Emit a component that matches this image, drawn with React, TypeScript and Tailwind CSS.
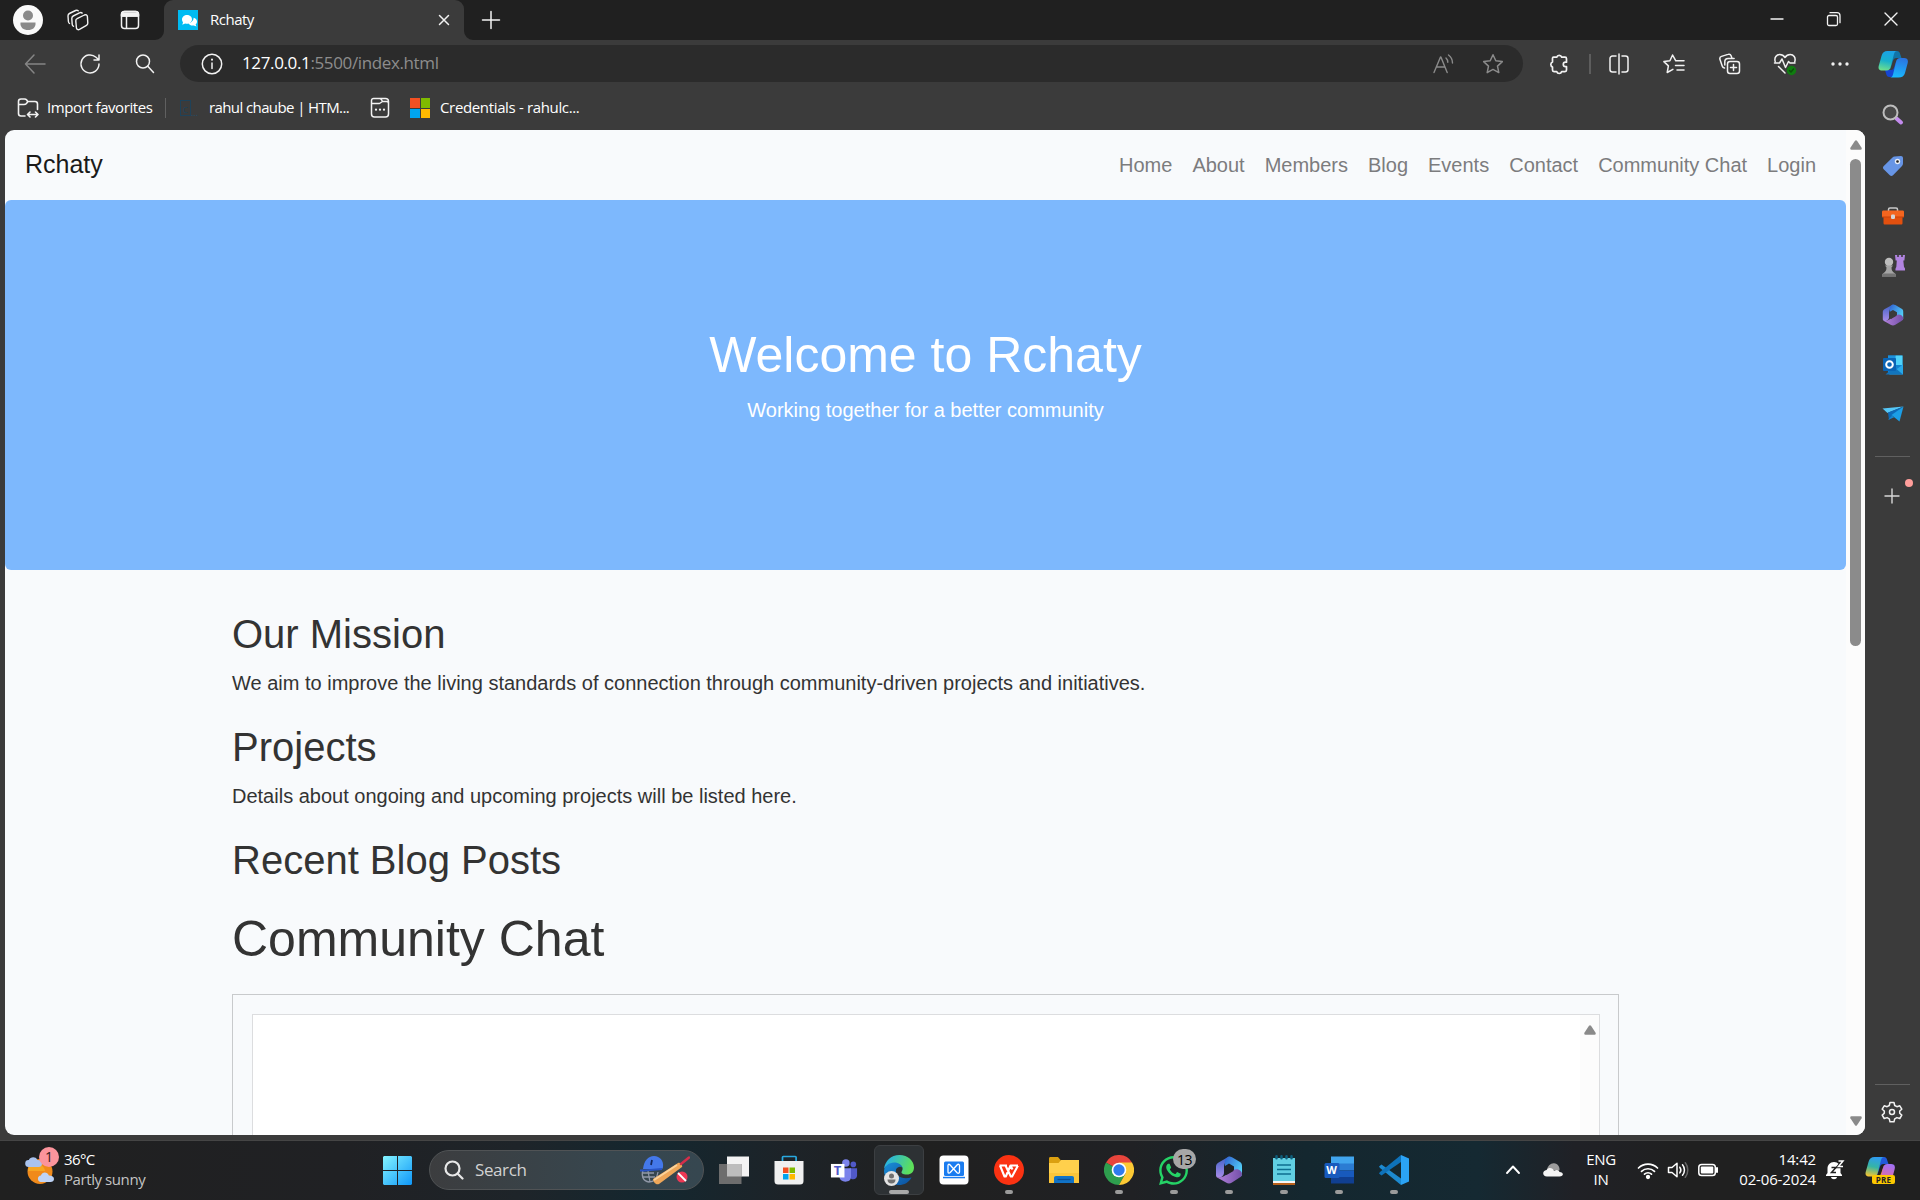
import React from "react";
import { FaWhatsapp } from "react-icons/fa";

type IconProps = { children: React.ReactNode; w?: number; h?: number; box?: string; stroke?: string; sw?: number };

/** Outline icon on a free view box. */
function Line({ children, w = 22, h = 22, box = "0 0 22 22", stroke = "#f2f2f2", sw = 1.5 }: IconProps) {
  return (
    <svg width={w} height={h} viewBox={box} fill="none" stroke={stroke} strokeWidth={sw} strokeLinecap="round" strokeLinejoin="round" className="shrink-0">
      {children}
    </svg>
  );
}

/** Filled, multi-colour artwork. */
function Art({ children, w = 30, h = 30, box = "0 0 30 30" }: IconProps) {
  return (
    <svg width={w} height={h} viewBox={box} className="shrink-0">
      {children}
    </svg>
  );
}

function Center({ children, className = "" }: { children: React.ReactNode; className?: string }) {
  return <div className={"flex shrink-0 items-center justify-center " + className}>{children}</div>;
}

function TitleBar() {
  return (
    <div className="flex h-10 bg-[#202020]">
      <div className="flex w-[164px] shrink-0 items-center pl-[13px]">
        <Art w={30} h={30}>
          <circle cx="15" cy="15" r="15" fill="#fafafa" />
          <circle cx="15" cy="10.5" r="5" fill="#8a8a8a" />
          <path d="M7.5 17.5h15c.6 5-3 7.500-7.500 7.500s-8.100-2.500-7.500-7.500z" fill="#8a8a8a" />
        </Art>
        <Center className="ml-[24px] w-[22px]">
          <Line sw={1.4}>
            <path d="M2.500 14.500C1.700 14 1.500 13.300 1.400 12.500L1 7c0-1.200.4-2 1.400-2.500l6.200-3c1-.5 2-.3 2.600.2" />
            <path d="M6.500 17.300c-.9-.4-1.300-1.100-1.300-2L4.800 9.500c0-1.200.4-2 1.400-2.500l6.300-3.200c1-.5 2-.3 2.700.3" />
            <path d="M8.800 12c-.1-1 .4-1.900 1.300-2.300l7.300-3.700c1.500-.7 2.900 0 3 1.600l.4 6.500c0 1-.4 1.800-1.300 2.300l-7 4c-1.500.8-3 0-3.100-1.700z" />
          </Line>
        </Center>
        <Center className="ml-[30px] w-[22px]">
          <Line sw={1.5}>
            <rect x="2.500" y="2.500" width="17" height="17" rx="3" />
            <path d="M2.500 7V5.500a3 3 0 0 1 3-3h11a3 3 0 0 1 3 3V7zM7.500 7v12" />
            <path d="M3 4h16v3H3z" fill="#f2f2f2" />
          </Line>
        </Center>
      </div>
      <div className="relative flex w-[300px] items-center rounded-t-[9px] bg-[#3b3b3b] pl-3.5">
        <svg className="absolute -left-[9px] bottom-0" width="9" height="9"><path d="M9 0v9H0a9 9 0 0 0 9-9z" fill="#3b3b3b" /></svg>
        <svg className="absolute -right-[9px] bottom-0" width="9" height="9"><path d="M0 0v9h9a9 9 0 0 1-9-9z" fill="#3b3b3b" /></svg>
        <Art w={20} h={20} box="0 0 20 20">
          <path d="M0 0h20v20H0z" fill="#00bbf2" />
          <path d="M19 11.500c0 1.300-.7 2.300-1.400 3l.9 1.900-2.700-.9c-2.600.5-5-.8-5.300-2.500 3.300-.4 5.400-3 5-5.300 2 .3 3.500 2 3.500 3.800z" fill="#fff" />
          <path d="M4 9.500c0-2.700 2.300-4.500 5-4.500s5 1.800 5 4.300-2.300 4.500-5 4.500c-.7 0-1.300-.1-1.900-.3L4.300 14.800l.7-2.500A4 4 0 0 1 4 9.500z" fill="#fff" />
        </Art>
        <span className="ml-3 flex-1 pb-0.5 text-[15px] tracking-[-0.5px] text-white">Rchaty</span>
        <Center className="mr-[9px] w-[22px]"><Line w={22}><path d="M6.500 6.500l9 9m0-9l-9 9" /></Line></Center>
      </div>
      <Center className="ml-[16px] w-[22px]"><Line><path d="M11 2.500v17M2.500 11h17" /></Line></Center>
      <div className="flex-1" />
      <Center className="h-[38px] w-[57px]"><Line sw={1.4}><path d="M5 11h12" /></Line></Center>
      <Center className="h-[38px] w-[57px]">
        <Line sw={1.3}><rect x="4.500" y="7.500" width="10" height="10" rx="1.500" /><path d="M7 4.700h7c2 0 3 1.200 3 3v7" /></Line>
      </Center>
      <Center className="h-[38px] w-[58px]"><Line sw={1.4}><path d="M5 5l12 12m0-12l-12 12" /></Line></Center>
    </div>
  );
}

function CopilotIcon({ pre = false }: { pre?: boolean }) {
  const id = pre ? "cp2" : "cp1";
  return (
    <Art w={30} h={28} box="0 0 30 28">
      <defs>
        <linearGradient id={id + "a"} x1="0.5" y1="0" x2="0.3" y2="1">
          <stop offset="0" stopColor={pre ? "#2f9bf0" : "#1ba1e6"} />
          <stop offset="0.5" stopColor={pre ? "#35b5a5" : "#18b0cc"} />
          <stop offset="1" stopColor={pre ? "#f5c430" : "#6fe08c"} />
        </linearGradient>
        <linearGradient id={id + "b"} x1="0.6" y1="0" x2="0.4" y2="1">
          <stop offset="0" stopColor={pre ? "#a070f5" : "#2b74e0"} />
          <stop offset="1" stopColor={pre ? "#f56a8a" : "#19b9ff"} />
        </linearGradient>
      </defs>
      <path d="M14 1h5c2 0 2.800 1.400 3.300 3.500L23.500 8h-5c-2 0-3 1-3.600 3L12 20z" fill={pre ? "#2259d8" : "#1174a8"} />
      <path d="M16 27h-4.500c-2 0-2.800-1-3.300-3L7 20h6c2 0 2.600-1 3.200-3L19 9z" fill={pre ? "#f78a3c" : "#1546d2"} />
      <path d="M9.500 1H19c-1.500 0-2.500 1.300-3 3l-3.300 13c-.6 2.200-1.600 3.500-4 3.500H4c-2.500 0-4-1.500-3.300-4.500L3.500 6c.9-3.300 2.800-5 6-5z" fill={"url(#" + id + "a)"} />
      <path d="M20.500 27.500H12c1.500 0 2.500-1.300 3-3L18 12c.6-2.500 1.900-4 4.500-4H26c2.900 0 4.500 1.500 3.700 5L27 23c-.9 3-3 4.500-6.500 4.500z" fill={"url(#" + id + "b)"} />
    </Art>
  );
}

function Toolbar() {
  return (
    <div className="flex h-12 items-center bg-[#3b3b3b] pb-px">
      <Center className="ml-[7px] w-[55px]"><Line stroke="#858585"><path d="M10 2L1.500 11l8.500 9M1.500 11H21" /></Line></Center>
      <Center className="w-[55px]"><Line><path d="M20 11a9 9 0 1 1-3-6.800l2.500 2.300M20 2v5h-5" /></Line></Center>
      <Center className="w-[55px]"><Line><circle cx="9" cy="8.500" r="6.500" /><path d="M13.800 13.300L19.500 19.500" /></Line></Center>
      <div className="ml-[8px] flex h-[37px] w-[1343px] items-center rounded-full bg-[#2b2b2b] pl-[21px]">
        <Line><circle cx="11" cy="11" r="9.700" /><path d="M11 10v5.500" /><path d="M11 6.600v.1" strokeWidth="2" /></Line>
        <span className="ml-[19px] flex-1 pb-px text-[17px] tracking-[-0.37px] text-[#8d8d8d]"><span className="text-white">127.0.0.1</span>:5500/index.html</span>
        <Center className="w-[50px]">
          <Line stroke="#8b8b8b" sw={1.400}><path d="M2 19.500L8.500 4h.4l6.300 15.500M4.500 14h8.500M14 5c1.300 1.200 1.800 2.500 1.800 4.300M16.500 2c2.600 1.900 4 4.500 4 8" /></Line>
        </Center>
        <Center className="mr-[5px] w-[50px]">
          <Line stroke="#8b8b8b" sw={1.500}><path d="M11 1.800l2.800 6 6.500.8-4.800 4.500 1.300 6.500L11 16.400l-5.800 3.200 1.300-6.500L1.700 8.600l6.500-.8z" /></Line>
        </Center>
      </div>
      <Center className="ml-[8px] w-[56px]">
        <Line sw={1.700}><path d="M5.500 4.200h3.200a2.600 2.600 0 0 1 5 0h3.300c1 0 1.500.5 1.500 1.500v3.500h-1a2.200 2.200 0 0 0 0 4.400h1v3.500c0 1-.5 1.500-1.500 1.500h-3.300a2.600 2.600 0 0 1-5 0H6c-1 0-1.500-.5-1.500-1.500V14a2.700 2.700 0 0 1 0-5V5.200c0-.6.300-1 1-1z" /></Line>
      </Center>
      <div className="ml-[2px] h-5 w-[2px] bg-[#5d5d5d]" />
      <Center className="w-[55px]">
        <Line><path d="M8 3H4.500A2.500 2.500 0 0 0 2 5.500v11A2.500 2.500 0 0 0 4.500 19H8M14 3h3.500A2.500 2.500 0 0 1 20 5.500v11a2.500 2.500 0 0 1-2.500 2.500H14M11 1v20" /></Line>
      </Center>
      <Center className="w-[56px]">
        <Line><path d="M14 7.800h-1.200L9.600 2 6.900 7.700.9 8.600l4.500 4.300-1.200 6.600 5.700-3.200M14 7.800h7M12.500 12.500H21M14 17h7" /></Line>
      </Center>
      <Center className="w-[55px]">
        <Line><rect x="8.500" y="8.500" width="12" height="12" rx="2.500" /><path d="M14.500 11.500v6M11.500 14.500h6M5.500 15c-1.400-.3-2-1-2.300-2L1 6.500c-.5-1.500.2-2.600 1.500-3.100L9 1.400c1.500-.5 2.600 0 3.100 1.300l.8 2.300M5.800 12V8.800a3.300 3.300 0 0 1 3.300-3.300h6" /></Line>
      </Center>
      <Center className="w-[55px]">
        <Line w={24} h={24} box="0 0 24 24">
          <path d="M2.200 9.500C1 5.500 3.500 2.500 6.800 2.500c2.300 0 4 1.200 5.200 3 1.200-1.800 2.900-3 5.200-3 3.300 0 5.800 3 4.600 7M1.500 11h5l2.500-4 3.500 8.500 3-6 1.500 1.500h5M5.500 14.500L12 21" />
          <circle cx="18.500" cy="18.500" r="4.700" fill="#107c10" stroke="none" /><path d="M16.500 18.500l1.500 1.500 2.500-3" stroke="#0a500a" />
        </Line>
      </Center>
      <Center className="w-[55px]"><Art w={18} h={4} box="0 0 18 4"><g fill="#f2f2f2"><circle cx="2" cy="2" r="1.700" /><circle cx="9" cy="2" r="1.700" /><circle cx="16" cy="2" r="1.700" /></g></Art></Center>
      <Center className="w-[51px]"><CopilotIcon /></Center>
    </div>
  );
}

function FavoritesBar() {
  return (
    <div className="flex h-10 items-center bg-[#3b3b3b] pl-[17px] text-[15px] text-white">
      <Line sw={1.600}><path d="M8 19H4a2.500 2.500 0 0 1-2.500-2.500v-12A2.500 2.500 0 0 1 4 2h3.500c1 0 1.700.4 2.200 1l1 1.500H18A2.500 2.500 0 0 1 20.500 7v5.500M1.500 7.500H7c1 0 1.800-.3 2.400-1l1.600-2M11 17.500h9.500M13 15l-2.500 2.500L13 20M18.500 15l2.500 2.500-2.500 2.500" /></Line>
      <span className="ml-[8px] w-[118px] pb-0.5 tracking-[-0.44px]">Import favorites</span>
      <div className="h-5 w-px bg-[#606060]" />
      <div className="ml-[14px] flex h-[17px] w-[29px] items-center">
        <div className="flex h-[16px] w-[11px] items-center justify-center border border-[#1f4259] text-[11px] leading-none text-[#1f4259]">c</div>
        <span className="mt-2 text-[9px] leading-none text-[#24506c]">...</span>
      </div>
      <span className="w-[161px] pb-0.5 tracking-[-0.6px]">rahul chaube | HTM...</span>
      <Line w={20} h={22} box="0 0 20 22" sw={1.500}>
        <path d="M3.500 1.500h6c1 0 1.600.4 2 1.200l1 1.800h4a2 2 0 0 1 2 2V17a3 3 0 0 1-3 3h-11a3 3 0 0 1-3-3V3.500a2 2 0 0 1 2-2zM1.500 6.500h8l3-2M8 1.500h7.500a3 3 0 0 1 3 3v2" />
        <path d="M6 12.500v.2M10 12.500v.2M14 12.500v.2" strokeWidth="2.200" />
      </Line>
      <div className="ml-5 grid grid-cols-2 gap-px">
        <div className="h-[9.5px] w-[9.5px] bg-[#f25022]" />
        <div className="h-[9.5px] w-[9.5px] bg-[#7fba00]" />
        <div className="h-[9.5px] w-[9.5px] bg-[#00a4ef]" />
        <div className="h-[9.5px] w-[9.5px] bg-[#ffb900]" />
      </div>
      <span className="ml-[10px] pb-0.5 tracking-[-0.35px]">Credentials - rahulc...</span>
    </div>
  );
}

function ArrowUp() {
  return <svg width="12" height="10" viewBox="0 0 12 10" className="shrink-0"><path d="M5 .8q1-1 2 0l4.600 7q.6 1.900-1.100 2h-9Q-.2 9.700.4 7.800z" fill="#8a8a8a" /></svg>;
}

const NAV = ["Home", "About", "Members", "Blog", "Events", "Contact", "Community Chat", "Login"];

function WebPage() {
  return (
    <div className="flex h-[1005px] w-[1860px] overflow-hidden rounded-[9px] bg-[#f8fafc] font-['Liberation_Sans',Arial,sans-serif] text-xl leading-[30px] text-[#333]">
      <div className="flex w-[1841px] flex-col overflow-hidden">
        <div className="flex h-[70px] shrink-0 items-center justify-between pr-5 pl-5">
          <div className="pb-0.5 text-[25px] text-[#1a1a1a]">Rchaty</div>
          <div className="flex text-[#7c7c7e]">
            {NAV.map((n) => <div key={n} className="px-2.5">{n}</div>)}
          </div>
        </div>
        <div className="flex h-[370px] shrink-0 flex-col items-center rounded-md bg-[#7db8fd] pt-[125px] text-white">
          <div className="mb-2.5 text-[50px] leading-[60px]">Welcome to Rchaty</div>
          <div>Working together for a better community</div>
        </div>
        <div className="mx-auto flex w-[1387px] flex-col gap-[25px] pt-10">
          <div><div className="mb-2.5 text-[40px] leading-[48px]">Our Mission</div><div>We aim to improve the living standards of connection through community-driven projects and initiatives.</div></div>
          <div><div className="mb-2.5 text-[40px] leading-[48px]">Projects</div><div>Details about ongoing and upcoming projects will be listed here.</div></div>
          <div className="text-[40px] leading-[48px]">Recent Blog Posts</div>
          <div className="text-[50px] leading-[60px]">Community Chat</div>
          <div className="h-[400px] border border-[#c8cacc] p-[19px] pr-[18px]">
            <div className="flex h-[360px] justify-end border border-[#dcdddf] bg-white">
              <div className="flex w-[19px] justify-center bg-[#fcfcfc] pt-[10px]"><ArrowUp /></div>
            </div>
          </div>
        </div>
      </div>
      <div className="flex w-[19px] flex-col items-center bg-[#fcfcfc] pt-[10px]">
        <ArrowUp />
        <div className="mt-[9px] h-[487px] w-[11px] rounded-full bg-[#8b8b8b]" />
        <div className="flex-1" />
        <div className="mb-[9px] rotate-180"><ArrowUp /></div>
      </div>
    </div>
  );
}

function M365({ size, id, hole }: { size: number; id: string; hole: string }) {
  return (
    <Art w={size} h={size} box="0 0 28 28">
      <defs>
        <linearGradient id={id + "x"} x1="0.3" y1="0" x2="0.3" y2="1"><stop offset="0" stopColor="#3f62c8" /><stop offset="1" stopColor="#a88ce8" /></linearGradient>
        <linearGradient id={id + "y"} x1="0" y1="0" x2="1" y2="0.7"><stop offset="0" stopColor="#2f5fd0" /><stop offset="1" stopColor="#55d5fa" /></linearGradient>
        <linearGradient id={id + "z"} x1="0" y1="0.5" x2="1" y2="0.5"><stop offset="0" stopColor="#b582dc" /><stop offset="1" stopColor="#7350a8" /></linearGradient>
      </defs>
      <path d="M14 .5L3.600 6.500C2.200 7.400 1 8.500 1 10.500v9c0 2 3 3 5 1.700 2-1.200 3-2.200 3-4.700v-6c0-2.500 1-4 2.500-5L16 2.500z" fill={"url(#" + id + "x)"} />
      <path d="M14 .5c1-.1 2 .2 3 .8L25 6c1.500 1 2 2 2 4v8c0 1-.5 2-1.500 2.500L19 14V10.500L14 7.500 10 10C9 5 10 2 14 .5z" fill={"url(#" + id + "y)"} />
      <path d="M1.500 21c3 1 6.500 0 8.500-1.500l8.500-5.500c3-1.800 8.500 0 8.500 4 0 2-1 2.800-2.300 3.600L17 26.500c-2 1.200-4 1.200-6 0L3 22z" fill={"url(#" + id + "z)"} />
      <path d="M14 8.500l4.500 2.600v4L11.500 19l-2.300-2v-5.700z" fill={hole} />
    </Art>
  );
}

function SideBar() {
  return (
    <div className="flex h-[1005px] flex-1 flex-col items-center">
      <div className="-mt-[41px] flex flex-col">
        <Center className="h-[51px]">
          <Art w={22} h={22} box="0 0 22 22"><path d="M14.500 14.500l4.500 4" stroke="#c38bee" strokeWidth="4" strokeLinecap="round" /><circle cx="8.500" cy="8.500" r="7" fill="#484848" stroke="#bdbdbd" strokeWidth="2" /></Art>
        </Center>
        <Center className="h-[51px]">
          <Art w={22} h={22} box="0 0 22 22"><path d="M12.500 1.500L19 1c1 0 2 .8 2 2v5.500c0 1-.3 1.700-1 2.400L11 20.200c-1 1-2.200 1-3.200 0L1.700 14.200c-1-1-.9-2.200.1-3.200L10.500 2.400c.6-.6 1.200-.8 2-.9z" fill="#6795e6" /><circle cx="15.500" cy="6.500" r="2.700" fill="#e6ecf7" /><circle cx="15.500" cy="6.500" r="1.300" fill="#222" /></Art>
        </Center>
        <Center className="h-[50px]">
          <Art w={22} h={22} box="0 0 22 22"><path d="M6.500 6V4.500c0-1 .6-1.500 1.500-1.500h6c.9 0 1.500.5 1.500 1.500V6" fill="none" stroke="#c9c9c9" strokeWidth="1.500" /><path d="M1.500 10h19v8c0 1-.5 1.500-1.500 1.500H3c-1 0-1.500-.5-1.500-1.500z" fill="#e2500f" /><path d="M0 7c0-1 .6-1.500 1.500-1.500h19c1 0 1.500.5 1.500 1.500v5H0z" fill="#f4651f" /><path d="M0 12h22" stroke="#c9430a" strokeWidth="1" /><rect x="9" y="9.500" width="4" height="4.500" rx="1.200" fill="#d6d6d6" /></Art>
        </Center>
        <Center className="h-[49px]">
          <Art w={24} h={24} box="0 0 24 24"><path d="M14 1h2.200v2h1.600V1h2.400v2h1.600V1H24l-.6 5.500H22.300L23 13c1 1 1.300 2 1 3.500h-9.500c-.2-1.500 0-2.500.8-3.500l.5-6.500h-1.200z" fill="#b184e0" /><circle cx="8" cy="8" r="4.200" fill="#bdbdbd" /><path d="M4 11.500h8l-1.500 2c0 3 .9 4 3 5.500 1.200.8 1.500 1.800 1.500 3.500H1c0-1.700.4-2.700 1.600-3.500 2-1.500 2.900-2.500 2.900-5.500z" fill="#a4a4a4" /><path d="M2 19.500h12c.8.800 1 1.700 1 3H1c0-1.300.3-2.200 1-3z" fill="#747474" /></Art>
        </Center>
        <Center className="h-[50px]"><M365 size={22} id="side" hole="#3b3b3b" /></Center>
        <Center className="h-[50px]">
          <Art w={22} h={22} box="0 0 22 22"><path d="M6 1.500h14.500v18H6z" fill="#1183cf" /><path d="M6 1.500h7.500V7H6z" fill="#1c91dc" /><path d="M13.500 1.500h7V11h-7z" fill="#4fd3fa" /><path d="M21 10v10.500H7L19 12z" fill="#28a8e8" /><path d="M3.500 20.500H21L12 13z" fill="#1275be" /><rect x="1" y="4" width="13" height="13" rx="1" fill="#0a64b5" /><circle cx="7.500" cy="10.500" r="3.300" fill="none" stroke="#fff" strokeWidth="2" /></Art>
        </Center>
        <Center className="h-[48px]">
          <Art w={22} h={22} box="0 0 22 22"><path d="M.5 5.500L21.500 3.500l-16 6.500z" fill="#55c8f8" /><path d="M21.500 3.500L6 9.500l1 7.500 3-4z" fill="#0d6ab8" /><path d="M21.500 3.500L9.500 12 17.500 18.500z" fill="#1b9ee6" /><path d="M6 17l4-4.500 2.300 1.800z" fill="#1486cf" /></Art>
        </Center>
      </div>
      <div className="mt-[18px] h-px w-[35px] bg-[#606060]" />
      <div className="relative mt-[28px] mr-[2px]">
        <Line stroke="#d8d8d8" sw={1.400}><path d="M11 4v14M4 11h14" /></Line>
        <div className="absolute -top-[6px] left-[24px] h-2 w-2 rounded-full bg-[#ff9e9b]" />
      </div>
      <div className="flex-1" />
      <div className="h-px w-[35px] bg-[#606060]" />
      <div className="mt-[16px] mr-px mb-[12px]">
        <Line><path d="M9 1.500h4l.7 3 2.200 1.200 2.900-.9 2 3.400L18.700 10v2.200l2.100 1.900-2 3.400-2.900-.9-2.200 1.200-.7 3H9l-.7-3-2.200-1.200-2.900.9-2-3.400 2.100-1.900V10L1.200 8.200l2-3.400 2.900.9 2.200-1.200z" /><circle cx="11" cy="11.100" r="2.500" /></Line>
      </div>
    </div>
  );
}

function AppCell({ children, running }: { children: React.ReactNode; running?: boolean }) {
  return (
    <div className="relative flex h-[60px] w-[55px] shrink-0 items-center justify-center">
      {children}
      {running && <div className="absolute bottom-[6px] h-1 w-2 rounded-full bg-[#9b9b9b]" />}
    </div>
  );
}

function TaskApps() {
  return (
    <>
      <AppCell><Art><path d="M8 1.500h22v20H8z" fill="#f3f3f3" /><path d="M0 9h22.500v20H0z" fill="#6d6d6d" /><path d="M8 9h14.500v12.500H8z" fill="#bdbdbd" /></Art></AppCell>
      <AppCell>
        <Art><path d="M8.500 7V2.300c0-.5.300-.8.800-.8h12c.5 0 .8.300.8.800V7" fill="none" stroke="#29a9e0" strokeWidth="1.700" /><path d="M.5 6h29v20a3.500 3.500 0 0 1-3.500 3.500H4A3.500 3.500 0 0 1 .5 26z" fill="#f0f0f0" /><path d="M9 12.500h5.500V18H9z" fill="#f25022" /><path d="M15.500 12.500H21V18h-5.500z" fill="#7fba00" /><path d="M9 19h5.500v5.500H9z" fill="#00a4ef" /><path d="M15.500 19H21v5.500h-5.500z" fill="#ffb900" /></Art>
      </AppCell>
      <AppCell>
        <Art w={28}><circle cx="17" cy="7.500" r="4" fill="#7b83eb" /><circle cx="25" cy="9" r="3" fill="#5059c9" /><path d="M21 13h8v8c0 2.500-2 4-4 4s-4-1-4-3z" fill="#5059c9" /><path d="M10 13h12.500v9c0 4-2.500 5.500-6 5.500s-6.500-2-6.500-6z" fill="#7b83eb" /><path d="M1 8.500h14.500V23H1z" fill="#fff" /></Art>
        <span className="absolute top-[21px] left-[15px] w-[13px] text-center text-[13px] leading-[18px] font-bold text-[#5059c9]">T</span>
      </AppCell>
      <AppCell>
        <div className="relative flex h-[50px] w-[50px] shrink-0 items-center justify-center rounded-md border border-[#3c3f42] bg-[#2d3134]">
          <Art>
            <defs>
              <linearGradient id="ed1" x1="0" y1="0" x2="1" y2="0.3"><stop offset="0.200" stopColor="#2bb5dc" /><stop offset="1" stopColor="#5de05a" /></linearGradient>
              <linearGradient id="ed2" x1="0" y1="0" x2="1" y2="1"><stop offset="0" stopColor="#1a8fd8" /><stop offset="1" stopColor="#0b4f9e" /></linearGradient>
            </defs>
            <path d="M0 14C1 6 7 0 15.500 0 24 0 30 6 30 12.500c0 4.500-3 7-7 7-4.500 0-6.500-1.500-5-3.500 2-3.500-1-7-5.500-7C7 9 2 10 0 14z" fill="url(#ed1)" />
            <path d="M0 16C.5 11 5 7.500 10 7.500c5 0 8 2.500 8.500 5.500-1.500-2-5-1.500-6.500 1.500-1 6 5 10.500 15.500 8C25 27.500 20 30 15 30 6.500 30 0 23.500 0 16z" fill="url(#ed2)" />
          </Art>
          <div className="absolute top-[25px] left-[9px]"><Art w={15} h={15}><circle cx="15" cy="15" r="15" fill="#e4e4e4" /><circle cx="15" cy="10" r="5" fill="#707070" /><path d="M7 17h16c0 5-3 8-8 8s-8-3-8-8z" fill="#707070" /></Art></div>
          <div className="absolute bottom-0 h-1 w-5 rounded-full bg-[#a9a9a9]" />
        </div>
      </AppCell>
      <AppCell>
        <Art><rect x="0.500" y="0.500" width="29" height="29" rx="4" fill="#fff" /><rect x="5" y="6.500" width="20" height="14.500" rx="1.500" fill="#1a7cf0" /><path d="M4 21.800h22v1.500H4z" fill="#1a7cf0" /><path d="M9 17.500v-7c0-1.300 1-1.600 1.900-.7l7.200 7.900c.9.900 2.400.7 2.400-.7v-6.500c0-1.300-1.300-1.700-2.200-.7l-7.100 7.700c-.9.900-2.200.7-2.200-.5z" fill="none" stroke="#fff" strokeWidth="1.300" /></Art>
      </AppCell>
      <AppCell running>
        <Art><circle cx="15" cy="15" r="15" fill="#fb3212" /><path d="M5.500 10.500h7.500M6 10.500L10.500 21.500h1.300L16.500 10.500h7.500M11.500 10.500l5.300 11h1.300L24 10.500M16.500 10.500l2 4" fill="none" stroke="#fff" strokeWidth="2.100" strokeLinejoin="round" /></Art>
      </AppCell>
      <AppCell>
        <Art><path d="M0 3.500C0 2.500.6 2 1.500 2H9l3 3.500V10H0z" fill="#dba010" /><path d="M0 8h9.500L12 5h18v23H0z" fill="#ffd04c" /><path d="M0 18h30v10H0z" fill="#fbc53a" /><path d="M5 28v-5c0-1.300.7-2 2-2h16c1.300 0 2 .7 2 2v5z" fill="#1173c7" /><path d="M8.500 24.500h13" stroke="#0b4f94" strokeWidth="1.300" /></Art>
      </AppCell>
      <AppCell running>
        <Art><path d="M15 15L2 7.500A15 15 0 0 1 28 7.500z" fill="#e8453c" /><path d="M2 7.500A15 15 0 0 0 15 30l6.500-11.500L15 15z" fill="#2e9e4e" /><path d="M15 30A15 15 0 0 0 28 7.500H15L21.500 18.500z" fill="#fcc934" /><circle cx="15" cy="15" r="7.300" fill="#fff" /><circle cx="15" cy="15" r="5.700" fill="#2f7bee" /></Art>
      </AppCell>
      <AppCell running>
        <FaWhatsapp size={33} color="#25d366" />
        <div className="absolute top-[9px] left-[27px] flex h-5 w-[23px] items-center justify-center rounded-full bg-[#a7a7a7] text-[14px] tracking-[-0.5px] text-black">13</div>
      </AppCell>
      <AppCell running><M365 size={28} id="task" hole="#202124" /></AppCell>
      <AppCell running>
        <Art><path d="M4 3h22v26H4z" fill="#61cfe2" /><path d="M4 26h22v2H4z" fill="#f5f5f5" /><path d="M4 28h22v2H4z" fill="#b8601a" /><path d="M8 10h14M8 14.500h14M8 19h14" stroke="#0e6f90" strokeWidth="1.700" /><path d="M7.500 1.300v2M12.500 1.300v2M17.500 1.300v2M22.500 1.300v2" stroke="#0e5f7c" strokeWidth="2.500" strokeLinecap="round" /></Art>
      </AppCell>
      <AppCell running>
        <Art><path d="M7 1.500h23V9H7z" fill="#41a5ee" /><path d="M7 8.500h23v7H7z" fill="#2b7cd3" /><path d="M7 15.500h23v7H7z" fill="#185abd" /><path d="M7 22h23v6.500H7z" fill="#103f91" /><rect x="0.500" y="8" width="15" height="15" rx="1.500" fill="#185abd" /></Art>
        <span className="absolute top-[21px] left-[13px] w-[15px] text-center text-[11px] leading-[18px] font-bold text-white">W</span>
      </AppCell>
      <AppCell running>
        <Art><path d="M0 11.500L2.500 9.500 22 23.500V30L1 13z" fill="#1d8ad0" /><path d="M0 18.500L2.500 20.500 22 7V0L1 17z" fill="#0e72ba" /><path d="M22 0l8 3.500v23L22 30z" fill="#2ba3f5" /></Art>
      </AppCell>
    </>
  );
}

function Taskbar() {
  return (
    <div className="flex h-[60px] items-center border-t border-[#454545] bg-[linear-gradient(90deg,#202020_0%,#202124_18%,#1e2429_27%,#14272f_34%,#1d2328_41%,#202020_48%,#202124_59%,#14272f_68%,#152932_77%,#202126_82%,#202020_88%)] pb-px text-white">
      <div className="relative flex w-[370px] items-center pl-[25px]">
        <Art w={30} h={30}><circle cx="15" cy="16.500" r="12.500" fill="#f08a1b" /><path d="M3 16c0-4 3-8 7-10 5 3 10 6 10 10z" fill="#f6a623" /><path d="M3.500 12a3.500 3.500 0 0 1 .4-7C5 2 10.500 1 12.500 5c3-.2 4.500 2 4.500 3.500 0 2-1 3.500-3.500 3.500z" fill="#a9c3ee" /><path d="M15.500 27a3.300 3.300 0 0 1 .4-6.500c1.200-4 6.600-4 8 0 3.300 0 5.100 1.500 5.100 3.500 0 2-1.500 3-3.500 3z" fill="#bed3f6" /></Art>
        <div className="absolute top-[-2px] left-[39px] flex h-5 w-5 items-center justify-center rounded-full bg-[#fb949c] pb-px text-[14px] text-[#33191b]">1</div>
        <div className="ml-[9px] pb-[3px] text-[15px] leading-5">
          <div className="tracking-[-0.6px]">36°C</div>
          <div className="tracking-[-0.42px] text-[#c4c4c4]">Partly sunny</div>
        </div>
      </div>
      <AppCell>
        <Art w={29} h={29} box="0 0 29 29"><defs><linearGradient id="win" x1="0" y1="0" x2="1" y2="1"><stop offset="0" stopColor="#84f4ff" /><stop offset="1" stopColor="#0f97f8" /></linearGradient></defs><path d="M1 0h13v14H0V1zM15 0h13l1 1v13H15zM0 15h14v14H1l-1-1zM15 15h14v13l-1 1H15z" fill="url(#win)" /></Art>
      </AppCell>
      <div className="ml-1 flex h-10 w-[275px] shrink-0 items-center rounded-full border border-[#505355] bg-[linear-gradient(90deg,#3c3d3f,#37464e_65%,#364750)] pl-3.5">
        <Line w={20} h={20} box="0 0 20 20" stroke="#e8e8e8" sw={2.200}><circle cx="8.500" cy="8.500" r="7" /><path d="M13.500 13.500l5 5" /></Line>
        <span className="ml-[11px] flex-1 text-[17px] tracking-[-0.4px] text-[#d2d2d2]">Search</span>
        <div className="mr-[13px]">
          <Art w={50} h={30} box="0 0 50 30">
            <path d="M3 15c-2 6 0 11 6 12 5 0 8-3 9-10M2 18h12M2 22h13M8 16l2 11" stroke="#9098a8" strokeWidth="1.300" fill="none" />
            <path d="M3 14C4 6 8 1 14 1c6 0 10 5 9 11-.2 1.500-.7 2-1.500 2z" fill="#4478ea" /><path d="M0 15.500h5l17-1.500" stroke="#2853c4" strokeWidth="2" fill="none" /><path d="M12 5l-1 5" stroke="#16295e" strokeWidth="1.800" />
            <path d="M13 24L38 8c2-1 5 2 4 4L19 29c-3 1.500-6-2-6-5z" fill="#efa759" /><path d="M14 25L37 10" stroke="#fbd39a" strokeWidth="2" /><path d="M41 9l8-6.500" stroke="#d42e4a" strokeWidth="2.500" strokeLinecap="round" />
            <circle cx="42" cy="22" r="5.500" fill="#ee3854" /><path d="M38 18l8 8" stroke="#fff" strokeWidth="1.800" />
          </Art>
        </div>
      </div>
      <div className="w-[2px] shrink-0" />
      <TaskApps />
      <div className="flex-1" />
      <Center className="w-[30px]"><Line stroke="#fff" sw={1.900}><path d="M5 14l6-6.500 6 6.500" /></Line></Center>
      <Center className="ml-[10px] w-[30px]"><Art w={20} h={14} box="0 0 20 14"><path d="M4 8C4 3 8 0 11 .3c4 .2 6 4 5.500 7z" fill="#9c9c9c" /><path d="M4 13.500c-5 0-5-6-.5-6.500C6 3.500 10 5 11 8c3-2 5-1 5.500 1 4.500 0 4.500 4.500 0 4.500z" fill="#f4f4f4" /></Art></Center>
      <div className="ml-[13px] w-[40px] pb-[3px] text-center text-[15px] leading-5 tracking-[-0.3px]">ENG<br />IN</div>
      <Center className="ml-[16px] w-[22px]"><Line w={22} h={20} box="0 0 22 20" stroke="#fff" sw={1.700}><path d="M1.500 8a13.500 13.500 0 0 1 19 0M4.500 11.300a9.500 9.500 0 0 1 13 0M7.500 14.200a5.300 5.300 0 0 1 7 0" /><circle cx="11" cy="17" r="1.300" fill="#fff" /></Line></Center>
      <Center className="ml-[8px] w-[22px]"><Line stroke="#fff" sw={1.500}><path d="M1.500 8.500h3.500L10 4.200v13.600L5 13.500H1.500zM12.800 8.200c1.300 1.700 1.300 4 0 5.700M15.500 5.800c2.600 3 2.600 7.500 0 10.500" /><path d="M18.300 3.800c3.300 4 3.300 10.500 0 14.500" stroke="#666" /></Line></Center>
      <Center className="ml-[8px] w-[22px]"><Art w={22} h={16} box="0 0 22 16"><rect x="1.800" y="2.500" width="16.500" height="11" rx="2.800" fill="none" stroke="#fff" strokeWidth="1.500" /><rect x="3.800" y="4.500" width="12.500" height="7" rx="1" fill="#fff" /><path d="M20 6v4" stroke="#fff" strokeWidth="2" strokeLinecap="round" /></Art></Center>
      <div className="ml-[16px] w-[81px] pb-[3px] text-right text-[15px] leading-5 tracking-[-0.15px] whitespace-nowrap">14:42<br />02-06-2024</div>
      <div className="ml-[8px] flex w-[22px] justify-center">
        <Art w={22} h={22} box="0 0 22 22"><path d="M10 3c-4 0-6.500 3-6.500 6.500V14L2 16v1h16v-1l-1.500-2V9.500C16.500 6 14 3 10 3z" fill="#fff" /><path d="M7 18h6c-.5 3-5.500 3-6 0z" fill="#fff" /><path d="M7.500 8.500h4.500l-4.500 5h4.500" fill="none" stroke="#222" strokeWidth="1.500" /><path d="M14.500 2h4.500L14.500 7.500h4.500" fill="none" stroke="#222" strokeWidth="3.500" /><path d="M14.500 2h4.500L14.500 7.500h4.500" fill="none" stroke="#fff" strokeWidth="1.500" /></Art>
      </div>
      <div className="relative mr-[25px] ml-[19px] w-[30px]">
        <CopilotIcon pre />
        <div className="absolute top-[19px] left-[7px] flex h-[9px] w-[23px] items-center justify-center rounded-[2px] bg-[#fcc800] text-[8px] leading-none font-bold tracking-[0.2px] text-[#222]">PRE</div>
      </div>
    </div>
  );
}

export default function App() {
  return (
    <div className="flex h-[1200px] w-[1920px] flex-col overflow-hidden bg-[#3b3b3b] font-['Open_Sans','Noto_Sans',sans-serif]">
      <TitleBar />
      <Toolbar />
      <FavoritesBar />
      <div className="mt-[2px] mb-[5px] flex pl-[5px]">
        <WebPage />
        <SideBar />
      </div>
      <Taskbar />
    </div>
  );
}
